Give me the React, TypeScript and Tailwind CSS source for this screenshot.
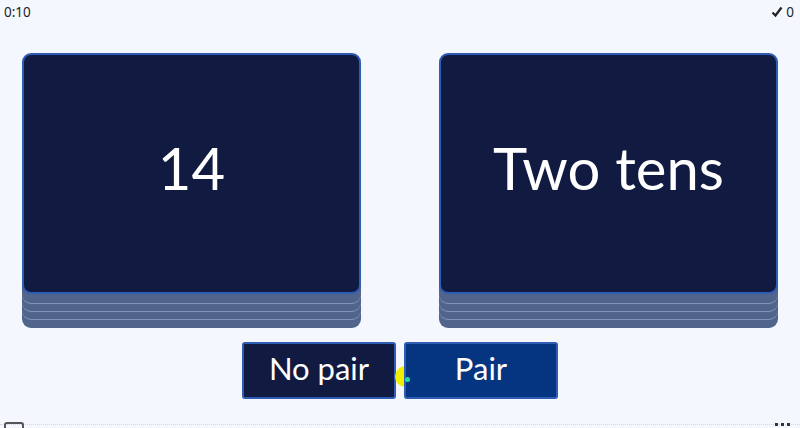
import React from 'react';

const stack =
  'shadow-[0_9px_0_#51648b,0_10px_0_#8393b8,0_17px_0_#51648b,0_18px_0_#8393b8,0_25px_0_#51648b,0_26px_0_#8393b8,0_34px_0_#51648b]';

function Card({ text }: { text: string }) {
  return (
    <div
      className={`flex h-[241px] w-[339px] items-center justify-center rounded-[9px] border-2 border-[#2f5cb4] bg-[#111a40] ${stack}`}
    >
      <span className="-mt-[12px] text-[58px] leading-none text-white">{text}</span>
    </div>
  );
}

export default function App() {
  return (
    <div
      className="relative flex h-[428px] w-[800px] flex-col overflow-hidden bg-[#f4f7fe] text-[#222]"
      style={{ fontFamily: 'Lato, "Noto Sans", sans-serif' }}
    >
      <div
        className="flex h-[24px] items-center justify-between px-[4px] text-[13.5px]"
        style={{ fontFamily: '"Noto Sans", sans-serif' }}
      >
        <span>0:10</span>
        <span className="flex items-center gap-[3px] pr-[2px]">
          <svg width="12" height="12" viewBox="0 0 12 12">
            <path d="M1.5 6.5 L4.5 9.5 L10.5 1.5" fill="none" stroke="#222" strokeWidth="2.2" />
          </svg>
          0
        </span>
      </div>

      <div className="mt-[29px] flex justify-between px-[22px]">
        <Card text="14" />
        <Card text="Two tens" />
      </div>

      <div className="relative mt-[48px] flex justify-center gap-[8px]">
        <button className="relative z-0 h-[57px] w-[154px] rounded-[3px] border-2 border-[#2f5cb4] bg-[#111a40] pb-[4px] text-[31px] text-white">
          No pair
        </button>
        <div className="absolute left-[395px] top-[24px] z-10 h-[21px] w-[21px] rounded-full bg-[#eef000]" />
        <button className="relative z-20 h-[57px] w-[154px] rounded-[3px] border-2 border-[#2f5cb4] bg-[#053581] pb-[4px] text-[31px] text-white">
          Pair
          <span className="absolute left-[-1px] top-[33px] h-[5px] w-[5px] rounded-full bg-[#1ae0a0]" />
        </button>
      </div>

      <div className="mt-auto flex h-[4px] items-start justify-between border-t border-dotted border-[#cfd6e6] px-[4px]">
        <span className="-mt-[3px] h-[6px] w-[20px] rounded-t-[3px] border-2 border-b-0 border-[#555]" />
        <span className="-mt-[2px] flex gap-[3px] pr-[6px]">
          <span className="h-[3px] w-[3px] bg-[#334]" />
          <span className="h-[3px] w-[3px] bg-[#334]" />
          <span className="h-[3px] w-[3px] bg-[#334]" />
        </span>
      </div>
    </div>
  );
}
